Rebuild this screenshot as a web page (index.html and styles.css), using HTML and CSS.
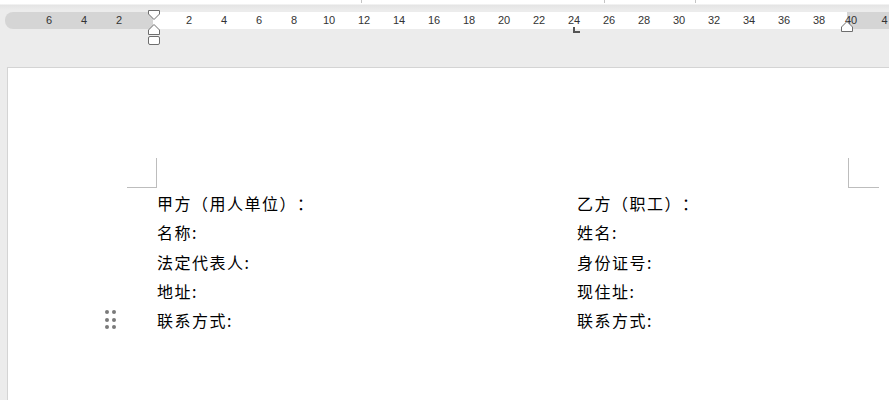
FILE: index.html
```html
<!DOCTYPE html>
<html lang="zh-CN">
<head>
<meta charset="utf-8">
<link rel="stylesheet" href="styles.css">
</head>
<body>
<div class="topbar">
  <span class="tick t1"></span><span class="tick t2"></span><span class="tick t3"></span>
</div>
<div class="ruler">
  <div class="band">
    <div class="seg seg-left"></div>
    <div class="seg seg-white"></div>
    <div class="seg seg-right"></div>
  </div>
  <div class="nums">
    <span></span><span>6</span><span>4</span><span>2</span><span></span><span>2</span><span>4</span><span>6</span><span>8</span><span>10</span><span>12</span><span>14</span><span>16</span><span>18</span><span>20</span><span>22</span><span>24</span><span>26</span><span>28</span><span>30</span><span>32</span><span>34</span><span>36</span><span>38</span><span class="n40">40</span><span class="n42">4</span>
  </div>
  <svg class="mk mk-left" width="14" height="42" viewBox="0 0 14 42">
    <path d="M1.5 5.5 H12.5 V9 L7 14.5 L1.5 9 Z" fill="#fff" stroke="#6e6e6e"/>
    <path d="M7 19.5 L12.5 25 V29.5 H1.5 V25 Z" fill="#fff" stroke="#6e6e6e"/>
    <rect x="1.5" y="31.5" width="11" height="8" rx="1.5" fill="#fff" stroke="#6e6e6e"/>
  </svg>
  <svg class="mk mk-tab" width="10" height="8" viewBox="0 0 10 8">
    <path d="M2 0 V5 H8" fill="none" stroke="#555" stroke-width="2"/>
  </svg>
  <svg class="mk mk-right" width="14" height="14" viewBox="0 0 14 14">
    <path d="M7 1.5 L12.5 7 V11.5 H1.5 V7 Z" fill="#fff" stroke="#6e6e6e"/>
  </svg>
</div>
<div class="page">
  <div class="corners">
    <div class="corner corner-l"></div>
    <div class="corner corner-r"></div>
  </div>
  <div class="cols">
    <div class="col col-a">
      <p>甲方（用人单位）：</p>
      <p>名称:</p>
      <p>法定代表人:</p>
      <p>地址:</p>
      <p class="handle-row"><span class="handle"><i></i><i></i><i></i><i></i><i></i><i></i></span>联系方式:</p>
    </div>
    <div class="col col-b">
      <p>乙方（职工）：</p>
      <p>姓名:</p>
      <p>身份证号:</p>
      <p>现住址:</p>
      <p>联系方式:</p>
    </div>
  </div>
</div>
</body>
</html>
```
FILE: styles.css
```css
html, body {
  margin: 0;
  padding: 0;
}
body {
  background: #ececec;
  width: 889px;
  height: 400px;
  overflow: hidden;
  font-family: "Noto Sans CJK SC", "Noto Sans", sans-serif;
}
.topbar {
  position: relative;
  height: 10px;
  background: linear-gradient(#ffffff 0, #ffffff 4px, #e4e4e4 5px, #ececec 10px);
}
.tick {
  position: absolute;
  top: 0;
  width: 1px;
  height: 3px;
  background: #c4c4c4;
}
.t1 { left: 361px; }
.t2 { left: 604px; }
.t3 { left: 695px; }

.ruler {
  position: relative;
  height: 17px;
  margin-top: 2px;
  margin-left: 5px;
}
.band {
  display: flex;
  height: 17px;
  border-radius: 8px 0 0 8px;
  overflow: hidden;
}
.seg-left { width: 148px; background: #d5d5d5; }
.seg-white { width: 694px; background: #ffffff; }
.seg-right { flex: 1; background: #d5d5d5; }
.nums {
  position: absolute;
  top: 0;
  left: -8.5px;
  display: flex;
  height: 17px;
  font-family: "Liberation Sans", "DejaVu Sans", sans-serif;
  font-size: 11px;
  color: #333;
  line-height: 17px;
}
.nums span {
  width: 35px;
  text-align: center;
  flex: none;
}
.nums .n40 { text-indent: -6px; }
.nums .n42 { text-align: left; text-indent: 10px; }
.mk { position: absolute; }
.mk-left { left: 142px; top: -7px; }
.mk-tab { left: 567px; top: 15px; }
.mk-right { left: 835px; top: 8px; }

.page {
  box-sizing: border-box;
  margin-top: 38px;
  margin-left: 7px;
  height: 333px;
  background: #ffffff;
  border-top: 1px solid #d4d4d4;
  border-left: 1px solid #d4d4d4;
  padding-top: 90px;
}
.corners {
  display: flex;
  height: 30px;
}
.corner {
  height: 29px;
  border-bottom: 1px solid #bdbdbd;
}
.corner-l {
  width: 29px;
  margin-left: 119px;
  border-right: 1px solid #bdbdbd;
}
.corner-r {
  width: 30px;
  margin-left: 691px;
  border-left: 1px solid #bdbdbd;
}
.cols {
  display: grid;
  grid-template-columns: 420px 300px;
  padding-left: 149px;
  margin-top: 1px;
}
.col p {
  margin: 0;
  font-size: 16px;
  letter-spacing: 1.5px;
  line-height: 29.3px;
  height: 29.3px;
  color: #000;
  white-space: nowrap;
  text-spacing-trim: space-all;
}
.handle-row { position: relative; }
.handle {
  position: absolute;
  left: -52px;
  top: 4px;
  width: 11px;
  display: grid;
  grid-template-columns: 4px 4px;
  column-gap: 3px;
  row-gap: 3.5px;
}
.handle i {
  display: block;
  width: 4px;
  height: 4px;
  border-radius: 50%;
  background: #7a7a7a;
}
```
